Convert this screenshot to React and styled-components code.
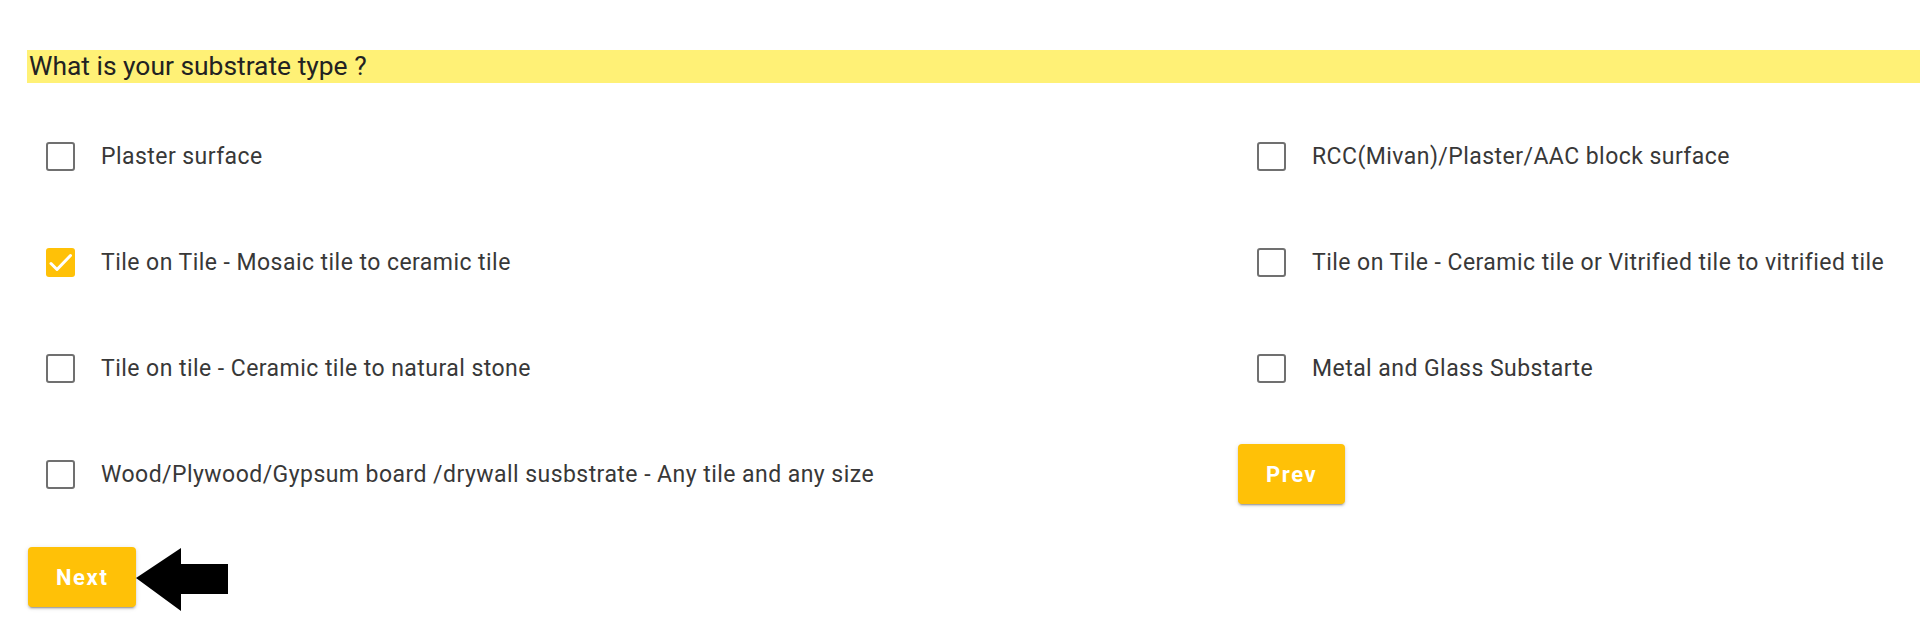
import React, { useState } from 'react';
import styled, { createGlobalStyle } from 'styled-components';

const GlobalStyle = createGlobalStyle`
  * { box-sizing: border-box; }
  body {
    margin: 0;
    background: #ffffff;
    font-family: Roboto, "Liberation Sans", Arial, sans-serif;
  }
`;

const leftOptions = [
  'Plaster surface',
  'Tile on Tile - Mosaic tile to ceramic tile',
  'Tile on tile - Ceramic tile to natural stone',
  'Wood/Plywood/Gypsum board /drywall susbstrate - Any tile and any size',
];

const rightOptions = [
  'RCC(Mivan)/Plaster/AAC block surface',
  'Tile on Tile - Ceramic tile or Vitrified tile to vitrified tile',
  'Metal and Glass Substarte',
];

const App = () => {
  const [checked, setChecked] = useState({
    'Tile on Tile - Mosaic tile to ceramic tile': true,
  });

  const toggle = (label) =>
    setChecked((prev) => ({ ...prev, [label]: !prev[label] }));

  const renderOption = (label) => (
    <Option key={label} onClick={() => toggle(label)}>
      <Box checked={!!checked[label]}>
        {checked[label] && (
          <svg width="29" height="29" viewBox="0 0 29 29">
            <path d="M5 15.5l6 6L24.5 7.5" fill="none" stroke="#fff" strokeWidth="3" strokeLinecap="round" strokeLinejoin="round" />
          </svg>
        )}
      </Box>
      <Label>{label}</Label>
    </Option>
  );

  return (
    <Page>
      <GlobalStyle />
      <Question>What is your substrate type ?</Question>
      <Grid>
        <Column>{leftOptions.map(renderOption)}</Column>
        <Column>
          {rightOptions.map(renderOption)}
          <Slot>
            <ActionBtn>Prev</ActionBtn>
          </Slot>
        </Column>
      </Grid>
      <Footer>
        <ActionBtn>Next</ActionBtn>
        <svg width="93" height="64" viewBox="0 0 93 64">
          <polygon points="0,31 45,1 45,17 92,17 92,47 45,47 45,64" fill="#000" />
        </svg>
      </Footer>
    </Page>
  );
};

export default App;

const Page = styled.div`
  width: 1920px;
  height: 639px;
  padding: 50px 0 0 27px;
  overflow: hidden;
`;

const Question = styled.div`
  height: 33px;
  line-height: 33px;
  padding-left: 2px;
  background: #fff176;
  color: #222;
  font-size: 26.4px;
`;

const Grid = styled.div`
  display: grid;
  grid-template-columns: 1211px 1fr;
  margin-top: 20px;
`;

const Column = styled.div`
  display: flex;
  flex-direction: column;
`;

const Option = styled.label`
  height: 106px;
  display: flex;
  align-items: center;
  padding-left: 19px;
  cursor: pointer;
`;

const Slot = styled.div`
  height: 106px;
  display: flex;
  align-items: center;
`;

const Box = styled.span`
  width: 29px;
  height: 29px;
  flex: none;
  display: flex;
  align-items: center;
  justify-content: center;
  border-radius: 3px;
  border: ${(props) => (props.checked ? 'none' : '2px solid #707070')};
  background: ${(props) => (props.checked ? '#ffc107' : '#fff')};
`;

const Label = styled.span`
  margin-left: 26px;
  font-size: 23px;
  letter-spacing: 0.45px;
  color: #383838;
`;

const ActionBtn = styled.button`
  height: 60px;
  padding: 0 28px;
  border: none;
  border-radius: 4px;
  background: #ffc107;
  color: #fff;
  font-family: Roboto, "Liberation Sans", Arial, sans-serif;
  font-size: 22px;
  font-weight: 700;
  letter-spacing: 1.6px;
  cursor: pointer;
  box-shadow: 0 3px 1px -2px rgba(0, 0, 0, 0.2), 0 2px 2px 0 rgba(0, 0, 0, 0.14),
    0 1px 5px 0 rgba(0, 0, 0, 0.12);
`;

const Footer = styled.div`
  display: flex;
  align-items: flex-start;
  margin-top: 20px;
  margin-left: 1px;
`;
